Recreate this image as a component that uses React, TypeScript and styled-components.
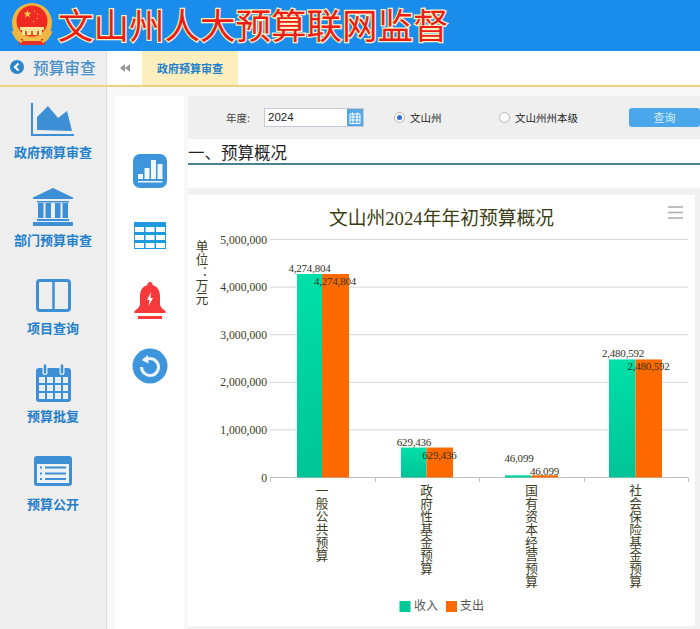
import React, { FC, ReactNode } from 'react';
import styled, { createGlobalStyle } from 'styled-components';

const GlobalStyle = createGlobalStyle`
  html, body {
    margin: 0;
    padding: 0;
    background: #fff;
    font-family: "Liberation Sans", "Noto Sans CJK SC", sans-serif;
  }
  * {
    box-sizing: border-box;
  }
`;

const Page = styled.div`
  width: 700px;
  height: 629px;
  overflow: hidden;
  display: flex;
  flex-direction: column;
`;

const Header = styled.header`
  height: 51px;
  flex: none;
  background: #1a8ceb;
  display: flex;
  align-items: center;
  padding: 0 0 3px 11px;
  gap: 5px;
`;

const SiteTitle = styled.h1`
  margin: 0;
  font-family: "Noto Sans CJK SC", sans-serif;
  font-size: 35.5px;
  line-height: 48px;
  font-weight: 400;
  white-space: nowrap;
  color: #ee1c16;
  -webkit-text-stroke: 2.5px #fdf0c0;
  paint-order: stroke fill;
`;

const NavBar = styled.nav`
  height: 36px;
  flex: none;
  display: flex;
  border-bottom: 2px solid #eed27f;
  background: #fff;
`;

const NavLabel = styled.div`
  width: 107px;
  flex: none;
  display: flex;
  align-items: center;
  gap: 9px;
  padding: 0 0 2px 10px;
  background: #eeeeee;
  border-right: 1px solid #dddddd;
  font-size: 15.7px;
  font-weight: 500;
  color: #4a90c8;
  white-space: nowrap;
`;

const CollapseButton = styled.div`
  width: 35px;
  flex: none;
  display: flex;
  align-items: center;
  justify-content: center;
`;

const ActiveTab = styled.div`
  width: 96px;
  flex: none;
  display: flex;
  align-items: center;
  justify-content: center;
  background: #fdeebd;
  color: #2180cc;
  font-family: "Noto Sans CJK SC", sans-serif;
  font-size: 11px;
  font-weight: 700;
`;

const Body = styled.div`
  flex: 1;
  min-height: 0;
  display: flex;
  background: #f8f8f8;
`;

const Sidebar = styled.aside`
  width: 107px;
  flex: none;
  display: flex;
  flex-direction: column;
  padding-top: 9px;
  background: #eeeeee;
  border-right: 1px solid #dddddd;
`;

const SideItem = styled.div`
  height: 88px;
  flex: none;
  display: flex;
  flex-direction: column;
  align-items: center;
`;

const SideIconSlot = styled.div`
  height: 46px;
  flex: none;
  display: flex;
  align-items: center;
  justify-content: center;
`;

const SideText = styled.div`
  margin-top: 2px;
  font-family: "Noto Sans CJK SC", sans-serif;
  font-size: 13px;
  line-height: 16px;
  font-weight: 700;
  color: #1f7fcb;
  white-space: nowrap;
`;

const IconPanel = styled.div`
  width: 69px;
  flex: none;
  margin: 9px 4px 0 8px;
  padding-top: 42px;
  background: #fff;
`;

const PanelSlot = styled.div`
  height: 65px;
  display: flex;
  align-items: center;
  justify-content: center;
`;

const Content = styled.main`
  flex: 1;
  min-width: 0;
  margin-top: 9px;
  display: flex;
  flex-direction: column;
`;

const FilterBar = styled.div`
  height: 43px;
  flex: none;
  display: flex;
  align-items: center;
  padding-left: 38px;
  background: #efefef;
  font-family: "Noto Sans CJK SC", sans-serif;
  font-size: 10.5px;
  color: #222;
`;

const YearLabel = styled.span`
  width: 38px;
  flex: none;
  color: #444;
`;

const DateField = styled.div`
  width: 100px;
  height: 19px;
  flex: none;
  margin-right: 30px;
  display: flex;
  align-items: stretch;
  background: #fff;
  border: 1px solid #c6cad8;
`;

const DateValue = styled.span`
  flex: 1;
  padding-left: 3px;
  font-family: "Liberation Sans", sans-serif;
  font-size: 11.5px;
  line-height: 17px;
  color: #222;
`;

const DateButton = styled.span`
  width: 16px;
  display: flex;
  align-items: center;
  justify-content: center;
  background: #55a8e6;
`;

const RadioGroup = styled.label<{ $width: number }>`
  width: ${(p) => p.$width}px;
  flex: none;
  display: flex;
  align-items: center;
  gap: 5px;
`;

const RadioDot = styled.span<{ $checked?: boolean }>`
  width: 11px;
  height: 11px;
  flex: none;
  border-radius: 50%;
  background: #fff;
  border: 1px solid #b5b5b5;
  display: flex;
  align-items: center;
  justify-content: center;

  &::after {
    content: '';
    width: 5px;
    height: 5px;
    border-radius: 50%;
    background: ${(p) => (p.$checked ? '#2d6fd6' : 'transparent')};
  }
`;

const QueryButton = styled.button`
  width: 71px;
  height: 19px;
  flex: none;
  padding: 0;
  border: 0;
  border-radius: 3px;
  background: #4aa8ea;
  color: #d8ecfb;
  font-family: "Noto Sans CJK SC", sans-serif;
  font-size: 11px;
  line-height: 19px;
`;

const SectionHeading = styled.h2`
  height: 26px;
  flex: none;
  margin: 0;
  background: #fff;
  border-bottom: 2px solid #4a8199;
  font-family: "Noto Sans CJK SC", sans-serif;
  font-size: 16.5px;
  line-height: 26px;
  font-weight: 400;
  color: #222;
`;

const SectionGap = styled.div`
  height: 23px;
  flex: none;
  background: #fff;
`;

const ChartBand = styled.div`
  flex: 1;
  padding: 7px 5px 3px 0;
  background: #f1f1f1;
`;

const ChartCard = styled.div`
  width: 507px;
  height: 431px;
  background: #fff;
`;

const ChartSvg = styled.svg`
  display: block;
`;

const ChartTitle = styled.text`
  font-family: "Liberation Serif", "Noto Sans CJK SC", serif;
  font-size: 18.75px;
  fill: #3c3c12;
  text-anchor: middle;
`;

const AxisValue = styled.text`
  font-family: "Liberation Serif", serif;
  font-size: 11.7px;
  fill: #3c3c1e;
  text-anchor: end;
`;

const DataValue = styled.text`
  font-family: "Liberation Serif", serif;
  font-size: 11px;
  letter-spacing: -0.2px;
  fill: #333320;
  text-anchor: middle;
`;

const VerticalText = styled.text`
  font-family: "Noto Sans CJK SC", sans-serif;
  font-size: 12.6px;
  letter-spacing: 0.45px;
  fill: #3c3c1e;
  writing-mode: vertical-rl;
`;

const LegendText = styled.text`
  font-family: "Noto Sans CJK SC", sans-serif;
  font-size: 12px;
  fill: #555;
`;

const menuItems: { label: string; icon: ReactNode }[] = [
  {
    label: '政府预算审查',
    icon: (
      <svg width="44" height="33" viewBox="0 0 44 33">
        <path d="M1 0v32h42" fill="none" stroke="#3d8fd6" strokeWidth="2" />
        <path d="M6 27V14L17 3l10 12 9-7 5 20z" fill="#3d8fd6" />
      </svg>
    ),
  },
  {
    label: '部门预算审查',
    icon: (
      <svg width="42" height="38" viewBox="0 0 42 38">
        <path d="M21 0L41 9.500v1.500H1V9.500z" fill="#3d8fd6" />
        <path d="M5 13h32v1.500H5zM5 31h32v2H5zM1 34h40v4H1z" fill="#3d8fd6" />
        <path d="M6 15h5.500v15H6zM13.500 15H19v15h-5.500zM23 15h5.500v15H23zM30.500 15H36v15h-5.500z" fill="#3d8fd6" />
      </svg>
    ),
  },
  {
    label: '项目查询',
    icon: (
      <svg width="35" height="33" viewBox="0 0 35 33">
        <rect x="1.500" y="1.500" width="32" height="30" rx="2.500" fill="none" stroke="#3d8fd6" strokeWidth="3" />
        <path d="M17.500 2v29" stroke="#3d8fd6" strokeWidth="2.500" />
      </svg>
    ),
  },
  {
    label: '预算批复',
    icon: (
      <svg width="35" height="38" viewBox="0 0 35 38">
        <path d="M3 4h29a3 3 0 0 1 3 3v28a3 3 0 0 1-3 3H3a3 3 0 0 1-3-3V7a3 3 0 0 1 3-3z" fill="#3d8fd6" />
        <path d="M9 1.500v7M26 1.500v7" stroke="#eeeeee" strokeWidth="5" strokeLinecap="round" />
        <path d="M9 1.500v7M26 1.500v7" stroke="#3d8fd6" strokeWidth="2.500" strokeLinecap="round" />
        <path
          d="M3 13h6v6H3zM11 13h6v6h-6zM19 13h6v6h-6zM27 13h5v6h-5zM3 21h6v6H3zM11 21h6v6h-6zM19 21h6v6h-6zM27 21h5v6h-5zM3 29h6v6H3zM11 29h6v6h-6zM19 29h6v6h-6zM27 29h5v6h-5z"
          fill="#e8eef4"
        />
      </svg>
    ),
  },
  {
    label: '预算公开',
    icon: (
      <svg width="38" height="30" viewBox="0 0 38 30">
        <rect width="38" height="30" rx="3" fill="#3d8fd6" />
        <rect x="3" y="8" width="32" height="19" fill="#eef2f6" />
        <path d="M11 11.500h21M11 17.500h21M11 23h21M6 11.500h2M6 17.500h2M6 23h2" stroke="#3d8fd6" strokeWidth="2.200" />
      </svg>
    ),
  },
];

const panelIcons: ReactNode[] = [
  <svg key="bars" width="34" height="34" viewBox="0 0 34 34">
    <rect width="34" height="34" rx="7" fill="#3d95dc" />
    <path d="M5 20h5v5H5zM11.500 14h5v11h-5zM18 6h5v19h-5zM24.500 10h5v15h-5zM5 27h24.500v1.500H5z" fill="#fff" fillOpacity="0.92" />
  </svg>,
  <svg key="table" width="32" height="27" viewBox="0 0 32 27">
    <rect width="32" height="27" fill="#1f9ae0" />
    <path
      d="M1 5h9v5H1zM11.500 5h9v5h-9zM22 5h9v5h-9zM1 13h9v5H1zM11.500 13h9v5h-9zM22 13h9v5h-9zM1 21h9v5H1zM11.500 21h9v5h-9zM22 21h9v5h-9z"
      fill="#fff"
    />
  </svg>,
  <svg key="bell" width="32" height="37" viewBox="0 0 32 37">
    <path d="M16 0a2.500 2.500 0 0 1 2.500 3C24 4.500 26 9 26 14v8c0 3 3 5 5.500 7v2H.5v-2C3 27 6 25 6 22v-8C6 9 8 4.500 13.500 3A2.500 2.500 0 0 1 16 0z" fill="#f63a3c" />
    <path d="M17 10l-4 8h2.500l-1 6 4.500-8h-2.500z" fill="#fff" />
    <rect x="4" y="34" width="24" height="3" fill="#f63a3c" />
  </svg>,
  <svg key="undo" width="36" height="36" viewBox="0 0 36 36">
    <circle cx="18" cy="18" r="17.500" fill="#3d95dc" />
    <path d="M14 11.500A8.500 8.500 0 1 1 9.500 19" fill="none" stroke="#eef5fb" strokeWidth="3" />
    <path d="M16 7l.5 8.500-7-3.500z" fill="#eef5fb" />
  </svg>,
];

type TBudgetRow = {
  name: string;
  income: number;
  expense: number;
  left: number;
  center: number;
  right: number;
};

const budgetRows: TBudgetRow[] = [
  { name: '一般公共预算', income: 4274804, expense: 4274804, left: 297, center: 322, right: 349 },
  { name: '政府性基金预算', income: 629436, expense: 629436, left: 401, center: 426.5, right: 453 },
  { name: '国有资本经营预算', income: 46099, expense: 46099, left: 505, center: 531.5, right: 558 },
  { name: '社会保险基金预算', income: 2480592, expense: 2480592, left: 609, center: 635.5, right: 662 },
];

const axisTicks = [5000000, 4000000, 3000000, 2000000, 1000000, 0];
const AXIS_BOTTOM = 477.5;
const AXIS_HEIGHT = 238;

const scaleY = (value: number) => AXIS_BOTTOM - (value / 5000000) * AXIS_HEIGHT;

const BudgetChart: FC = () => (
  <ChartSvg width="507" height="431" viewBox="188 195 507 431">
    <defs>
      <linearGradient id="incomeFill" x1="0" y1="0" x2="0" y2="1">
        <stop offset="0" stopColor="#00e0a8" />
        <stop offset="1" stopColor="#00c496" />
      </linearGradient>
    </defs>

    <ChartTitle x="441.500" y="225">
      文山州2024年年初预算概况
    </ChartTitle>
    <path d="M668 207h15M668 212.500h15M668 218h15" stroke="#aaa" strokeWidth="1.500" />
    <VerticalText x="202" y="240">
      单位：万元
    </VerticalText>

    {axisTicks.map((tick) => (
      <g key={tick}>
        <line x1="270" x2="688" y1={scaleY(tick)} y2={scaleY(tick)} stroke={tick ? '#d6d6d6' : '#c0c0c0'} />
        <AxisValue x="267" y={scaleY(tick) + 4}>
          {tick.toLocaleString('en-US')}
        </AxisValue>
      </g>
    ))}
    {[270, 375, 479, 584, 688].map((x) => (
      <line key={x} x1={x + 0.5} x2={x + 0.5} y1="477.500" y2="482" stroke="#c0c0c0" />
    ))}

    {budgetRows.map((row) => {
      const incomeTop = scaleY(row.income);
      const expenseTop = scaleY(row.expense);
      const isSmall = row.income < 100000;
      return (
        <g key={row.name}>
          <rect x={row.left} y={incomeTop} width={row.center - row.left} height={AXIS_BOTTOM - incomeTop} fill="url(#incomeFill)" />
          <rect x={row.center} y={expenseTop} width={row.right - row.center} height={AXIS_BOTTOM - expenseTop} fill="#ff6a00" />
          <DataValue x={row.center - 12.5} y={incomeTop - (isSmall ? 13 : 2)}>
            {row.income.toLocaleString('en-US')}
          </DataValue>
          <DataValue x={row.center + 13} y={expenseTop + (isSmall ? 0 : 11)}>
            {row.expense.toLocaleString('en-US')}
          </DataValue>
          <VerticalText x={row.center} y="484">
            {row.name}
          </VerticalText>
        </g>
      );
    })}

    <rect x="399.500" y="601" width="11" height="11" fill="#00c896" />
    <LegendText x="414" y="610">
      收入
    </LegendText>
    <rect x="446" y="601" width="11" height="11" fill="#ff6a00" />
    <LegendText x="460" y="610">
      支出
    </LegendText>
  </ChartSvg>
);

const Emblem: FC = () => (
  <svg width="42" height="43" viewBox="0 0 42 43">
    <circle cx="21" cy="20" r="20" fill="#f0b840" />
    <circle cx="21" cy="18" r="15.500" fill="#ee2a22" />
    <path d="M16.500 7l1 2.700 2.900.1-2.300 1.800.8 2.800-2.400-1.600-2.400 1.600.8-2.800-2.300-1.800 2.900-.1z" fill="#f8d048" />
    <path d="M23.500 7l1 1.300-1.500.7zM27 10l.4 1.600-1.600.2zM27 15l-.5 1.500-1.300-.9zM23.500 18l-1 1.200-.7-1.400z" fill="#f8d048" />
    <path d="M9 24h24v3H9zM11 27h20v5H11z" fill="#fbe39a" />
    <path d="M14 28h2v4h-2zM20 28h2v4h-2zM26 28h2v4h-2z" fill="#d2691e" />
    <path d="M6 36h30l-3 6H9z" fill="#e4322a" />
    <path d="M12 35h18v3H12z" fill="#f4c24a" />
    <path d="M2 28c2 6 5 9 9 11M40 28c-2 6-5 9-9 11" fill="none" stroke="#f0b840" strokeWidth="3" />
  </svg>
);

const App: FC = () => (
  <Page>
    <GlobalStyle />
    <Header>
      <Emblem />
      <SiteTitle>文山州人大预算联网监督</SiteTitle>
    </Header>
    <NavBar>
      <NavLabel>
        <svg width="14" height="14" viewBox="0 0 14 14">
          <circle cx="7" cy="7" r="7" fill="#2b86cf" />
          <path d="M8.500 3.500L5 7l3.500 3.500" fill="none" stroke="#fff" strokeWidth="2.200" />
        </svg>
        预算审查
      </NavLabel>
      <CollapseButton>
        <svg width="10" height="8" viewBox="0 0 10 8">
          <path d="M5 0v8L0 4zM10 0v8L5 4z" fill="#999" />
        </svg>
      </CollapseButton>
      <ActiveTab>政府预算审查</ActiveTab>
    </NavBar>
    <Body>
      <Sidebar>
        {menuItems.map((item) => (
          <SideItem key={item.label}>
            <SideIconSlot>{item.icon}</SideIconSlot>
            <SideText>{item.label}</SideText>
          </SideItem>
        ))}
      </Sidebar>
      <IconPanel>
        {panelIcons.map((icon, index) => (
          <PanelSlot key={index}>{icon}</PanelSlot>
        ))}
      </IconPanel>
      <Content>
        <FilterBar>
          <YearLabel>年度:</YearLabel>
          <DateField>
            <DateValue>2024</DateValue>
            <DateButton>
              <svg width="12" height="12" viewBox="0 0 12 12">
                <path d="M1 2h10v9.500H1zM1 5h10M1 8h10M4 2v9.500M8 2v9.500M3.500 0.500v2M8.500 0.500v2" fill="none" stroke="#fff" strokeWidth="1" />
              </svg>
            </DateButton>
          </DateField>
          <RadioGroup $width={105}>
            <RadioDot $checked />
            文山州
          </RadioGroup>
          <RadioGroup $width={130}>
            <RadioDot />
            文山州州本级
          </RadioGroup>
          <QueryButton>查询</QueryButton>
        </FilterBar>
        <SectionHeading>一、预算概况</SectionHeading>
        <SectionGap />
        <ChartBand>
          <ChartCard>
            <BudgetChart />
          </ChartCard>
        </ChartBand>
      </Content>
    </Body>
  </Page>
);

export default App;
